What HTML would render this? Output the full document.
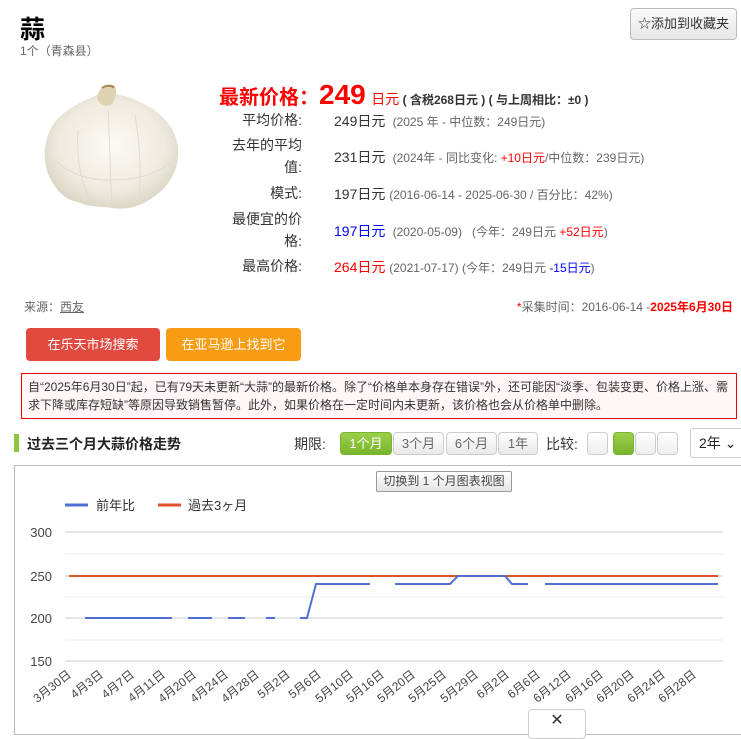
<!DOCTYPE html>
<html><head><meta charset="utf-8"><style>
*{margin:0;padding:0;box-sizing:border-box}
body{width:741px;height:726px;overflow:hidden;background:#fff;font-family:"Liberation Sans","Noto Sans CJK SC",sans-serif;color:#333;position:relative}
.a{position:absolute;white-space:nowrap}
.g{color:#666;font-size:12px}
.r{color:#f00}.b{color:#00f}
.lab{position:absolute;width:80px;text-align:right;font-size:14px;color:#333;line-height:22px;left:222px;white-space:normal}
.val{position:absolute;left:334px;font-size:14px;white-space:nowrap}
.val small{font-size:12px;color:#666}
.pb{position:absolute;top:432px;height:23px;border:1px solid #ccc;border-radius:4px;background:linear-gradient(#fff,#e8e8e8);font-size:13px;color:#666;text-align:center;line-height:21px}
.sq{position:absolute;top:432px;height:23px;width:21px;border:1px solid #ccc;border-radius:4px;background:linear-gradient(#fff,#eee)}
</style></head><body>
<div class="a" style="left:20px;top:10px;font-size:25px;font-weight:bold;color:#000">蒜</div>
<div class="a" style="left:20px;top:42px;font-size:12px;color:#666">1个（青森县）</div>
<div class="a" style="left:630px;top:8px;width:107px;height:32px;border:1px solid #bbb;border-radius:4px;background:linear-gradient(#fafafa,#e6e6e6);font-size:13px;color:#333;line-height:30px;text-align:center">☆添加到收藏夹</div>

<svg class="a" style="left:40px;top:80px" width="145" height="132" viewBox="0 0 145 132">
<defs><radialGradient id="gg" cx="50%" cy="45%" r="60%"><stop offset="0" stop-color="#fbfaf5"/><stop offset="0.65" stop-color="#eeebdf"/><stop offset="1" stop-color="#d6d0bd"/></radialGradient></defs>
<path d="M60 14 C45 20 20 30 10 50 C3 65 3 85 10 98 C16 110 25 120 38 122 C50 128 62 126 72 128 C85 130 100 127 112 118 C128 108 140 90 138 68 C136 48 122 32 100 22 C88 16 78 14 72 14 Z" fill="url(#gg)"/>
<path d="M57 18 C58 8 66 3 74 5 C78 10 76 18 72 24 C66 28 60 26 57 18 Z" fill="#e0d3b4"/>
<path d="M62 8 C66 5 72 5 74 8" stroke="#a88a50" stroke-width="2" fill="none"/>
<path d="M38 50 C36 80 42 105 50 120 M95 35 C100 65 102 95 98 124 M68 30 C70 60 70 95 72 126 M15 80 C30 95 50 100 70 100 C95 100 115 95 132 82" stroke="#e0dbca" fill="none"/>
</svg>

<div class="a" style="left:219px;top:79px;font-size:20px;font-weight:bold;color:#f00">最新价格：<span style="font-size:28px">249</span> <span style="font-size:14px;font-weight:normal">日元</span><span style="font-size:12px;color:#333"> ( 含税268日元 ) ( 与上周相比：±0 )</span></div>

<div class="lab" style="top:109px">平均价格:</div>
<div class="val" style="top:111px">249日元 <small>&nbsp;(2025 年 - 中位数：249日元)</small></div>
<div class="lab" style="top:134px">去年的平均值:</div>
<div class="val" style="top:147px">231日元 <small>&nbsp;(2024年 - 同比变化: <span class="r">+10日元</span>/中位数：239日元)</small></div>
<div class="lab" style="top:182px">模式:</div>
<div class="val" style="top:184px">197日元 <small>(2016-06-14 - 2025-06-30 / 百分比：42%)</small></div>
<div class="lab" style="top:208px">最便宜的价格:</div>
<div class="val b" style="top:221px">197日元 <small>&nbsp;(2020-05-09) &nbsp; (今年：249日元 <span class="r">+52日元</span>)</small></div>
<div class="lab" style="top:255px">最高价格:</div>
<div class="val r" style="top:257px">264日元 <small>(2021-07-17) (今年：249日元 <span class="b">-15日元</span>)</small></div>

<div class="a g" style="left:24px;top:298px">来源：<u>西友</u></div>
<div class="a g" style="right:8px;top:298px"><span class="r">*</span>采集时间：2016-06-14 -<b class="r">2025年6月30日</b></div>

<div class="a" style="left:26px;top:328px;width:134px;height:33px;background:#e14a3f;border-radius:4px;color:#fff;font-size:13px;text-align:center;line-height:33px">在乐天市场搜索</div>
<div class="a" style="left:166px;top:328px;width:135px;height:33px;background:#f89c14;border-radius:4px;color:#fff;font-size:13px;text-align:center;line-height:33px">在亚马逊上找到它</div>

<div class="a" style="left:21px;top:373px;width:716px;height:46px;border:1px solid #e00;background:#fff6f6;font-size:12px;color:#333;line-height:18px;padding:4px 6px;white-space:normal">自“2025年6月30日”起，已有79天未更新“大蒜”的最新价格。除了“价格单本身存在错误”外，还可能因“淡季、包装变更、价格上涨、需求下降或库存短缺”等原因导致销售暂停。此外，如果价格在一定时间内未更新，该价格也会从价格单中删除。</div>

<div class="a" style="left:14px;top:434px;width:5px;height:18px;background:#8dc63f"></div>
<div class="a" style="left:27px;top:434px;font-size:14px;font-weight:bold;color:#222">过去三个月大蒜价格走势</div>
<div class="a" style="left:294px;top:434px;font-size:14px;color:#333">期限:</div>
<div class="pb" style="left:340px;width:52px;background:linear-gradient(#9ccf4a,#78b52c);border-color:#78b52c;color:#fff">1个月</div>
<div class="pb" style="left:393px;width:51px">3个月</div>
<div class="pb" style="left:446px;width:51px">6个月</div>
<div class="pb" style="left:498px;width:40px">1年</div>
<div class="a" style="left:546px;top:434px;font-size:14px;color:#333">比较:</div>
<div class="sq" style="left:587px"></div>
<div class="sq" style="left:613px;background:linear-gradient(#9ccf4a,#78b52c);border-color:#78b52c"></div>
<div class="sq" style="left:635px"></div>
<div class="sq" style="left:657px"></div>
<div class="a" style="left:690px;top:428px;width:55px;height:30px;border:1px solid #ccc;border-radius:3px;font-size:14px;line-height:28px;padding-left:8px;color:#222">2年 ⌄</div>

<div class="a" style="left:14px;top:465px;width:740px;height:270px;border:1px solid #bbb"></div>
<div class="a" style="left:376px;top:471px;width:136px;height:21px;border:1px solid #999;border-radius:2px;background:linear-gradient(#fff,#e4e4e4);font-size:12px;color:#444;text-align:center;line-height:19px">切换到 1 个月图表视图</div>

<svg class="a" style="left:0;top:490px;font-family:'Liberation Sans','Noto Sans CJK SC',sans-serif" width="741" height="236">
<line x1="65" y1="15" x2="88" y2="15" stroke="#4f6fd6" stroke-width="3"/>
<text x="96" y="20" font-size="13" fill="#333">前年比</text>
<line x1="158" y1="15" x2="181" y2="15" stroke="#e0522a" stroke-width="3"/>
<text x="188" y="20" font-size="13" fill="#333">過去3ヶ月</text>
<g stroke="#ccc"><line x1="65" y1="42" x2="723" y2="42"/><line x1="65" y1="86" x2="723" y2="86"/><line x1="65" y1="128" x2="723" y2="128"/><line x1="65" y1="171" x2="723" y2="171"/></g>
<g stroke="#eee"><line x1="65" y1="64" x2="723" y2="64"/><line x1="65" y1="107" x2="723" y2="107"/><line x1="65" y1="150" x2="723" y2="150"/></g>
<g font-size="13" fill="#444" text-anchor="end"><text x="52" y="47">300</text><text x="52" y="91">250</text><text x="52" y="133">200</text><text x="52" y="176">150</text></g>
<line x1="69" y1="86" x2="718" y2="86" stroke="#e0522a" stroke-width="2"/>
<g stroke="#4f6fd6" stroke-width="2" fill="none">
<path d="M85 128H172M188 128H212M228 128H245M266 128H275M300 128H307L316 94H370M395 94H450L458 86H505L512 94H528M545 94H718"/>
</g>
<g font-size="12" fill="#444" text-anchor="end">
<text transform="translate(72,186) rotate(-38)">3月30日</text>
<text transform="translate(104,186) rotate(-38)">4月3日</text>
<text transform="translate(135,186) rotate(-38)">4月7日</text>
<text transform="translate(166,186) rotate(-38)">4月11日</text>
<text transform="translate(197,186) rotate(-38)">4月20日</text>
<text transform="translate(229,186) rotate(-38)">4月24日</text>
<text transform="translate(260,186) rotate(-38)">4月28日</text>
<text transform="translate(291,186) rotate(-38)">5月2日</text>
<text transform="translate(322,186) rotate(-38)">5月6日</text>
<text transform="translate(354,186) rotate(-38)">5月10日</text>
<text transform="translate(385,186) rotate(-38)">5月16日</text>
<text transform="translate(416,186) rotate(-38)">5月20日</text>
<text transform="translate(447,186) rotate(-38)">5月25日</text>
<text transform="translate(479,186) rotate(-38)">5月29日</text>
<text transform="translate(510,186) rotate(-38)">6月2日</text>
<text transform="translate(541,186) rotate(-38)">6月6日</text>
<text transform="translate(572,186) rotate(-38)">6月12日</text>
<text transform="translate(604,186) rotate(-38)">6月16日</text>
<text transform="translate(635,186) rotate(-38)">6月20日</text>
<text transform="translate(666,186) rotate(-38)">6月24日</text>
<text transform="translate(697,186) rotate(-38)">6月28日</text>
</g>
</svg>
<div class="a" style="left:528px;top:709px;width:58px;height:30px;border:1px solid #ccc;border-radius:4px;background:#fff;text-align:center;font-size:16px;color:#333;line-height:22px">✕</div>
</body></html>
